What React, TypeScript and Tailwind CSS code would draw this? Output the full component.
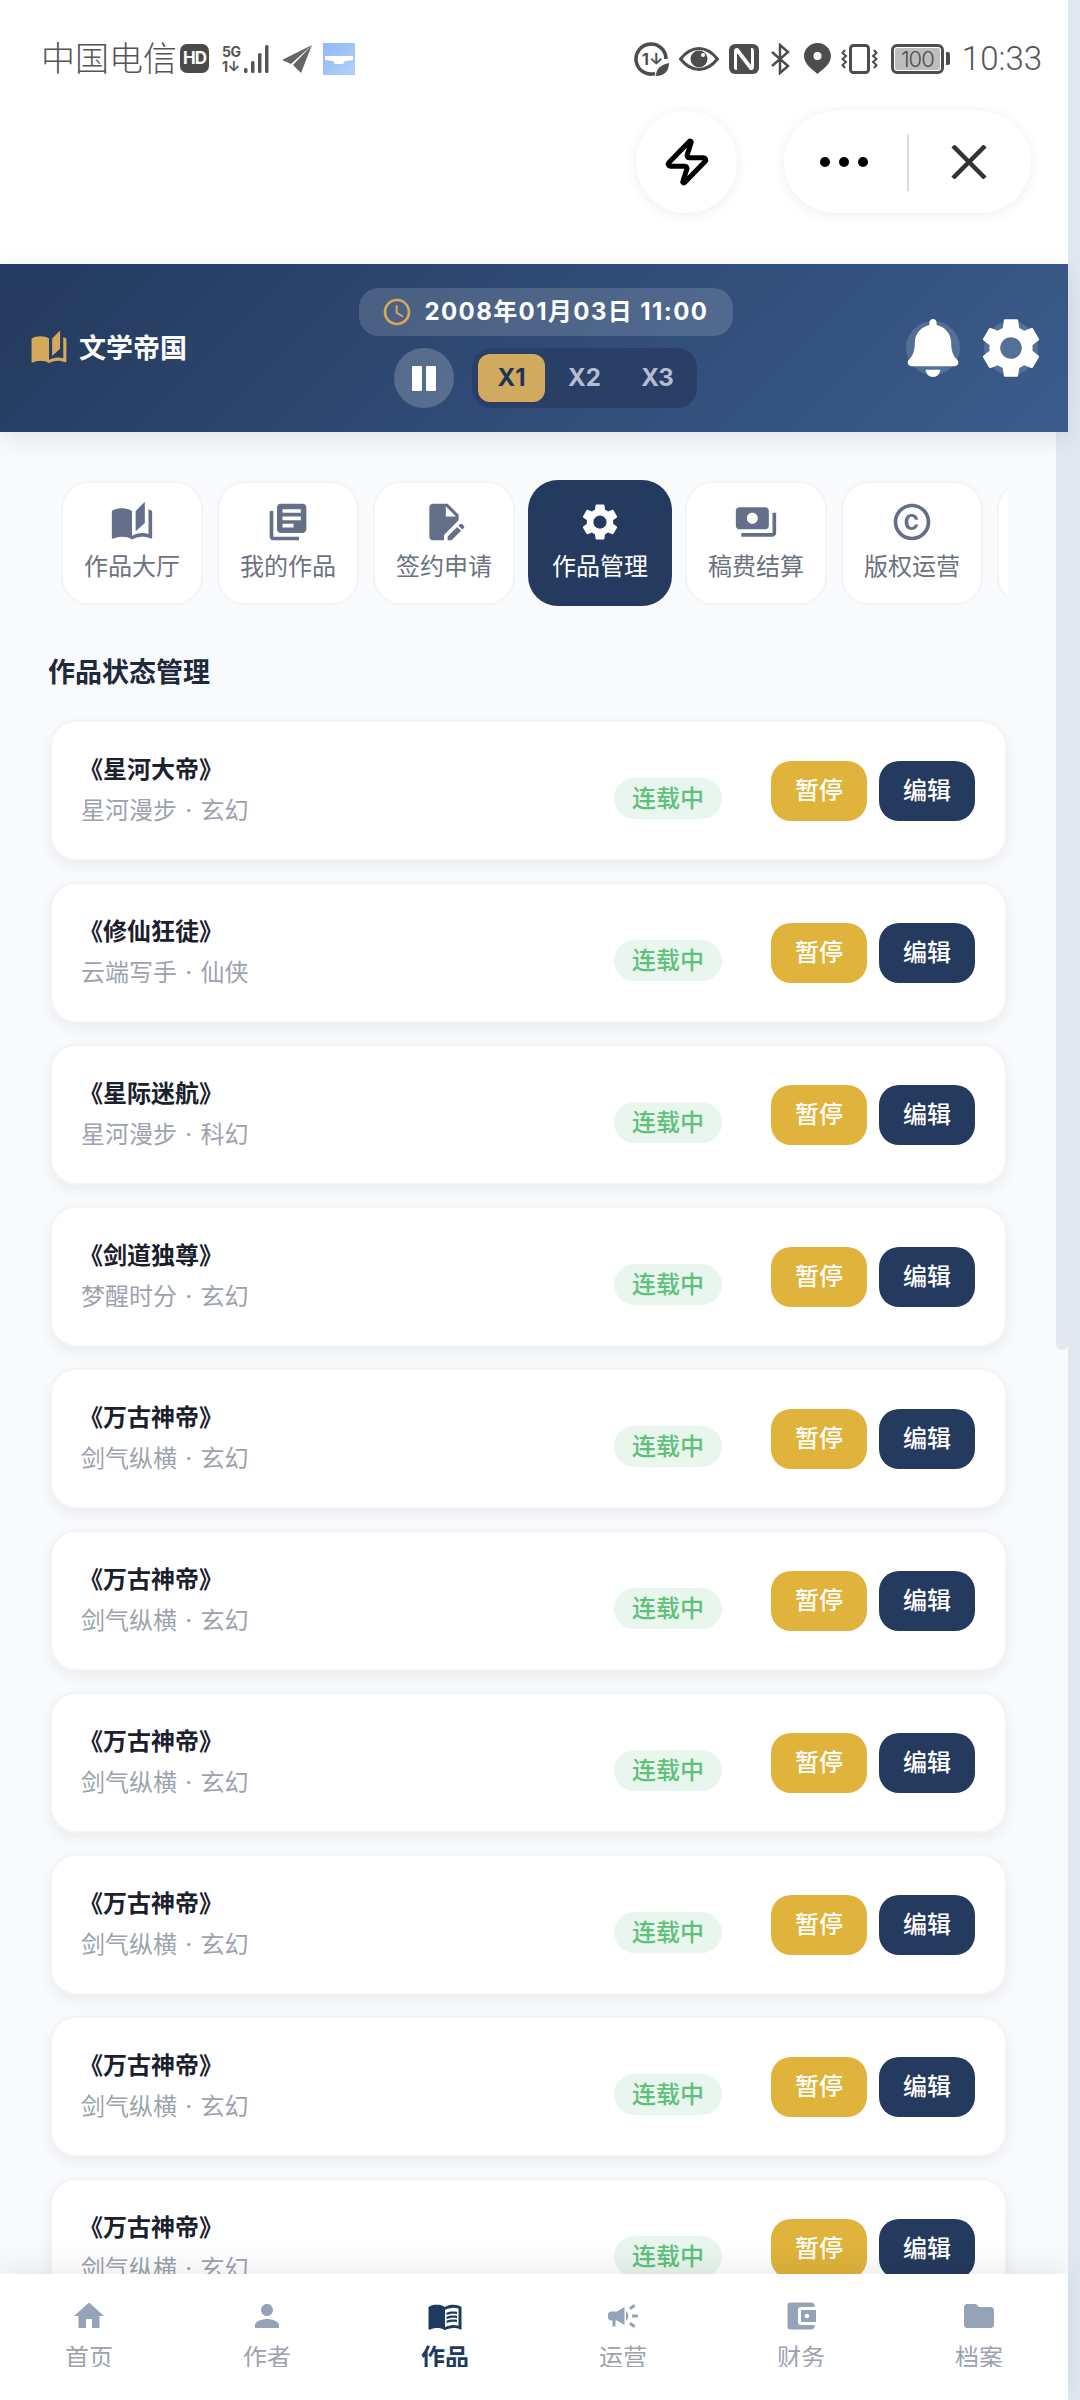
import React from 'react'
import { Zap } from 'lucide-react'
import { FaBell } from 'react-icons/fa'
import {
  MdAccessTime,
  MdAccountBalanceWallet,
  MdAutoStories,
  MdCampaign,
  MdCopyright,
  MdEditDocument,
  MdFolder,
  MdHome,
  MdLibraryBooks,
  MdMenuBook,
  MdPayments,
  MdPerson,
  MdSettings,
} from 'react-icons/md'

const tabs = [
  { label: '作品大厅', icon: MdAutoStories },
  { label: '我的作品', icon: MdLibraryBooks },
  { label: '签约申请', icon: MdEditDocument },
  { label: '作品管理', icon: MdSettings, active: true },
  { label: '稿费结算', icon: MdPayments },
  { label: '版权运营', icon: MdCopyright },
]

const works = [
  { title: '《星河大帝》', sub: '星河漫步 · 玄幻' },
  { title: '《修仙狂徒》', sub: '云端写手 · 仙侠' },
  { title: '《星际迷航》', sub: '星河漫步 · 科幻' },
  { title: '《剑道独尊》', sub: '梦醒时分 · 玄幻' },
  { title: '《万古神帝》', sub: '剑气纵横 · 玄幻' },
  { title: '《万古神帝》', sub: '剑气纵横 · 玄幻' },
  { title: '《万古神帝》', sub: '剑气纵横 · 玄幻' },
  { title: '《万古神帝》', sub: '剑气纵横 · 玄幻' },
  { title: '《万古神帝》', sub: '剑气纵横 · 玄幻' },
  { title: '《万古神帝》', sub: '剑气纵横 · 玄幻' },
]

const navItems = [
  { label: '首页', icon: MdHome },
  { label: '作者', icon: MdPerson },
  { label: '作品', icon: MdMenuBook, active: true },
  { label: '运营', icon: MdCampaign },
  { label: '财务', icon: MdAccountBalanceWallet },
  { label: '档案', icon: MdFolder },
]

const StatusBar: React.FC = () => (
  <div className="h-[111px] pt-[6px] pl-[41px] pr-[26px] flex items-center justify-between text-[#555555]">
    <div className="flex items-center">
      <span className="text-[34px] leading-none font-light">中国电信</span>
      <div className="ml-[3px] w-[29px] h-[29px] rounded-[7px] bg-[#4a4a4a] text-white text-[17px] font-bold flex items-center justify-center tracking-[-1px]">
        HD
      </div>
      <div className="ml-[13px] flex items-end gap-[4px]">
        <div className="flex flex-col items-start leading-none">
          <span className="text-[14px] font-bold leading-[15px] tracking-[-0.5px]">5G</span>
          <span className="text-[14px] font-bold leading-[15px] tracking-[-0.5px]">1↓</span>
        </div>
        <svg width="26" height="30" viewBox="0 0 26 30" fill="#555555">
          <rect x="0" y="24" width="3.5" height="5" rx="1.5" />
          <rect x="7" y="17" width="3.5" height="12" rx="1.5" />
          <rect x="14" y="9" width="3.5" height="20" rx="1.5" />
          <rect x="21" y="1" width="3.5" height="28" rx="1.5" />
        </svg>
      </div>
      <svg className="ml-[12px]" width="30" height="28" viewBox="0 0 30 28" fill="#666666">
        <path d="M30 0 L0 15 L9 19 Z" />
        <path d="M30 0 L11 20 L19 28 Z" />
      </svg>
      <svg className="ml-[11px]" width="32" height="32" viewBox="0 0 32 32">
        <defs>
          <linearGradient id="appTile" x1="0" y1="0" x2="1" y2="1">
            <stop offset="0" stopColor="#8fb8f5" />
            <stop offset="1" stopColor="#b4d0f8" />
          </linearGradient>
        </defs>
        <rect width="32" height="32" fill="url(#appTile)" />
        <path d="M2 13 H30 V17 L22 18 L20 21 H12 L10 18 L2 17 Z" fill="#ffffff" />
      </svg>
    </div>
    <div className="flex items-center">
      <svg width="35" height="34" viewBox="0 0 35 34" fill="none" stroke="#4d4d4d">
        <path d="M21 31.5 A15 15 0 1 1 32 17" strokeWidth="3.6" />
        <text x="8" y="23" fontSize="16" fontWeight="700" fill="#4d4d4d" stroke="none">1↓</text>
        <path d="M22 34 C22 26 27 23 35 21 C35 28 31 34 22 34 Z" fill="#4d4d4d" stroke="none" />
      </svg>
      <svg className="ml-[10px]" width="40" height="24" viewBox="0 0 40 24">
        <path d="M1.5 12 C8 4 14 1.5 20 1.5 C26 1.5 32 4 38.5 12 C32 20 26 22.5 20 22.5 C14 22.5 8 20 1.5 12 Z" fill="none" stroke="#4d4d4d" strokeWidth="3" />
        <circle cx="20" cy="12" r="8.5" fill="#4d4d4d" />
        <circle cx="24" cy="8" r="2" fill="#ffffff" />
      </svg>
      <svg className="ml-[10px]" width="30" height="30" viewBox="0 0 30 30">
        <rect width="30" height="30" rx="6" fill="#4d4d4d" />
        <path d="M9 4 C5 4 5 6 5 8 V22 C5 24 5 26 8 26 V9 L21 26 H22 C25 26 25 24 25 22 V8 C25 6 25 4 22 4 V21 L9 4 Z" fill="#ffffff" />
      </svg>
      <svg className="ml-[11px]" width="21" height="32" viewBox="0 0 21 32" fill="none" stroke="#4d4d4d" strokeWidth="2.5">
        <path d="M2 9 L18 23 L10 30 V2 L18 9 L2 23" />
      </svg>
      <svg className="ml-[13px]" width="27" height="31" viewBox="0 0 27 31" fill="#4d4d4d">
        <path fillRule="evenodd" d="M13.5 0 C21 0 27 6 27 13 C27 21 19 26 13.5 31 C8 26 0 21 0 13 C0 6 6 0 13.5 0 Z M13.5 9 A4 4 0 1 0 13.5 17 A4 4 0 1 0 13.5 9 Z" />
      </svg>
      <svg className="ml-[10px]" width="37" height="30" viewBox="0 0 37 30" fill="none" stroke="#4d4d4d">
        <rect x="9.5" y="1.5" width="18" height="27" rx="3" strokeWidth="3" />
        <path d="M4 6 L1.5 9 L5 12 L1.5 15 L5 18 L1.5 21 L4 24" strokeWidth="2" />
        <path d="M33 6 L35.5 9 L32 12 L35.5 15 L32 18 L35.5 21 L33 24" strokeWidth="2" />
      </svg>
      <div className="ml-[13px] flex items-center">
        <div className="w-[53px] h-[30px] rounded-[6px] border-[3px] border-[#4d4d4d] p-[1px] flex">
          <div className="flex-1 rounded-[2px] bg-[#bdbdbd] flex items-center justify-center text-[22px] leading-none text-[#4d4d4d] font-light tracking-[-1px]">
            100
          </div>
        </div>
        <div className="ml-[2px] w-[4px] h-[13px] rounded-r-[2px] bg-[#4d4d4d]" />
      </div>
      <span className="ml-[12px] text-[33px] leading-none font-light [font-family:Roboto,sans-serif]">10:33</span>
    </div>
  </div>
)

const MiniBar: React.FC = () => (
  <div className="h-[102px] flex justify-end gap-[47px] pr-[37px]">
    <div className="w-[101px] h-[102px] rounded-full bg-white shadow-[0_2px_14px_rgba(0,0,0,0.07)] flex items-center justify-center">
      <Zap size={50} strokeWidth={2.4} color="#000000" />
    </div>
    <div className="w-[247px] h-[102px] rounded-full bg-white shadow-[0_2px_14px_rgba(0,0,0,0.07)] flex items-center">
      <div className="flex-1 flex items-center justify-center gap-[9px] pr-[6px]">
        <div className="w-[10px] h-[10px] rounded-full bg-black" />
        <div className="w-[10px] h-[10px] rounded-full bg-black" />
        <div className="w-[10px] h-[10px] rounded-full bg-black" />
      </div>
      <div className="w-[2px] h-[57px] bg-[#dddddd] -ml-[2px]" />
      <div className="flex-1 flex items-center justify-center pr-[3px]">
        <svg width="36" height="34" viewBox="0 0 36 34" fill="none" stroke="#333333" strokeWidth="4.5">
          <path d="M2 1 L34 33 M34 1 L2 33" />
        </svg>
      </div>
    </div>
  </div>
)

const GameHeader: React.FC = () => (
  <div className="relative z-10 h-[168px] shrink-0 px-[30px] flex items-center justify-between bg-[linear-gradient(135deg,#243a5e,#3b5c8c)] shadow-[0_6px_24px_rgba(0,0,0,0.1)]">
    <div className="flex items-center gap-[11px] w-[155px]">
      <MdAutoStories size={38} color="#d4a95a" className="shrink-0" />
      <span className="text-[27px] font-bold text-white leading-none whitespace-nowrap">文学帝国</span>
    </div>
    <div className="flex flex-col items-center gap-[12px]">
      <div className="w-[374px] h-[48px] rounded-[20px] bg-white/15 flex items-center pl-[22px] gap-[12px]">
        <MdAccessTime size={32} color="#d4a95a" className="shrink-0" />
        <span className="text-[24px] font-bold text-white tracking-[1.4px] whitespace-nowrap">2008年01月03日 11:00</span>
      </div>
      <div className="flex items-center gap-[18px]">
        <div className="w-[60px] h-[60px] rounded-full bg-white/20 flex items-center justify-center gap-[4px]">
          <div className="w-[10px] h-[25px] rounded-[1px] bg-white" />
          <div className="w-[10px] h-[25px] rounded-[1px] bg-white" />
        </div>
        <div className="h-[60px] rounded-[20px] bg-[#293f66] p-[6px] flex gap-[6px]">
          <div className="w-[67px] rounded-[12px] bg-[#d0aa5e] flex items-center justify-center text-[24px] font-bold text-[#1f3557]">X1</div>
          <div className="w-[67px] flex items-center justify-center text-[24px] font-bold text-[#b5bed0]">X2</div>
          <div className="w-[67px] flex items-center justify-center text-[24px] font-bold text-[#b5bed0]">X3</div>
        </div>
      </div>
    </div>
    <div className="flex items-center gap-[24px]">
      <div className="w-[54px] h-[54px] rounded-full bg-white/15 flex items-center justify-center">
        <FaBell size={58} color="#ffffff" className="shrink-0" />
      </div>
      <div className="w-[54px] h-[54px] rounded-full bg-white/15 flex items-center justify-center">
        <MdSettings size={72} color="#ffffff" className="shrink-0" />
      </div>
    </div>
  </div>
)

const TabStrip: React.FC = () => (
  <div className="shrink-0 overflow-hidden flex gap-[14px] pl-[13px] mt-[48px] h-[126px] items-center">
    {tabs.map((tab) => {
      const Icon = tab.icon
      return tab.active ? (
        <div
          key={tab.label}
          className="shrink-0 w-[144px] h-[126px] -mx-[1px] rounded-[30px] bg-[#243a5e] text-white flex flex-col items-center pt-[20px]"
        >
          <Icon size={44} />
          <span className="mt-[7px] text-[24px] leading-[32px] whitespace-nowrap">{tab.label}</span>
        </div>
      ) : (
        <div
          key={tab.label}
          className="shrink-0 w-[142px] h-[124px] rounded-[28px] bg-white border-2 border-[#f1f4f8] text-[#6b7280] flex flex-col items-center pt-[17px]"
        >
          <Icon size={44} className="text-[#64708a]" />
          <span className="mt-[7px] text-[24px] leading-[32px] whitespace-nowrap">{tab.label}</span>
        </div>
      )
    })}
    <div className="shrink-0 w-[142px] h-[124px] rounded-[28px] bg-white border-2 border-[#f1f4f8]" />
  </div>
)

const WorkCard: React.FC<{ title: string; sub: string }> = ({ title, sub }) => (
  <div className="ml-[2px] mr-[1px] h-[141px] shrink-0 rounded-[26px] bg-white border-2 border-[#f1f4f8] shadow-[0_5px_14px_rgba(0,0,0,0.06)] pl-[29px] pr-[30px] flex items-center">
    <div className="flex-1">
      <div className="-ml-[2px] text-[24px] leading-[32px] font-bold text-[#1a202c]">{title}</div>
      <div className="mt-[9px] text-[24px] leading-[32px] text-[#9ca3af] [word-spacing:1.5px]">{sub}</div>
    </div>
    <div className="mt-[16px] w-[108px] h-[41px] rounded-full bg-[#e9f6ee] text-[#5fc07c] text-[24px] font-medium flex items-center justify-center">
      连载中
    </div>
    <div className="ml-[49px] flex gap-[12px]">
      <div className="w-[96px] h-[60px] rounded-[20px] bg-[#e0b33c] text-white text-[24px] font-medium flex items-center justify-center">暂停</div>
      <div className="w-[96px] h-[60px] rounded-[20px] bg-[#243a5e] text-white text-[24px] font-medium flex items-center justify-center">编辑</div>
    </div>
  </div>
)

const BottomNav: React.FC = () => (
  <div className="relative z-10 h-[126px] shrink-0 bg-white shadow-[0_-6px_30px_rgba(0,0,0,0.08)] grid grid-cols-6">
    {navItems.map((item) => {
      const Icon = item.icon
      return (
        <div
          key={item.label}
          className={`flex flex-col items-center pt-[24px] ${item.active ? 'text-[#1e3a5f] font-bold' : 'text-[#9ca3af]'}`}
        >
          <Icon size={36} className={item.active ? '' : 'text-[#94a3b8]'} />
          <span className="mt-[8px] h-[25px] overflow-hidden text-[24px] leading-[32px]">{item.label}</span>
        </div>
      )
    })}
  </div>
)

const App: React.FC = () => (
  <div className="w-[1080px] h-[2400px] flex overflow-hidden bg-[#e2e8f0] [font-family:Inter,'Noto_Sans_CJK_SC',sans-serif]">
    <div className="w-[1068px] h-full flex flex-col bg-[#f8fafc]">
      <div className="h-[264px] shrink-0 bg-white">
        <StatusBar />
        <MiniBar />
      </div>
      <GameHeader />
      <div className="flex-1 min-h-0 flex overflow-hidden">
        <div className="w-[1056px] px-[48px] flex flex-col">
          <TabStrip />
          <h2 className="shrink-0 mt-[49px] mb-[29px] text-[27px] leading-[36px] font-bold text-[#1e293b]">作品状态管理</h2>
          <div className="flex flex-col gap-[21px]">
            {works.map((work, i) => (
              <WorkCard key={i} title={work.title} sub={work.sub} />
            ))}
          </div>
        </div>
        <div className="w-[12px]">
          <div className="w-full h-[918px] rounded-b-[6px] bg-[#e2e8f0]" />
        </div>
      </div>
      <BottomNav />
    </div>
  </div>
)

export default App
